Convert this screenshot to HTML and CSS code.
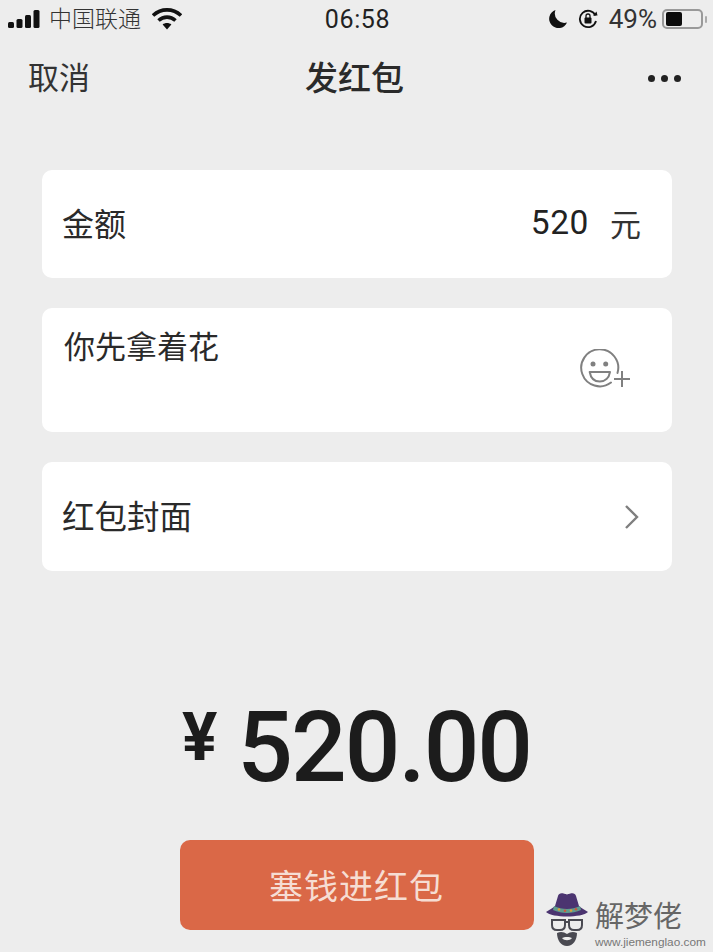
FILE: index.html
```html
<!DOCTYPE html>
<html lang="zh-CN">
<head>
  <meta charset="UTF-8" />
  <meta name="viewport" content="width=device-width, initial-scale=1" />
  <title>发红包</title>
  <link rel="stylesheet" href="styles.css">
</head>
<body>
  <div class="page">
    <!-- Status bar -->
    <div class="status-bar">
      <div class="status-left">
        <svg class="signal" width="34" height="18" viewBox="0 0 34 18">
          <rect x="0" y="12" width="6" height="6" rx="1.5" />
          <rect x="8.5" y="9" width="6" height="9" rx="1.5" />
          <rect x="17" y="5" width="6" height="13" rx="1.5" />
          <rect x="25.5" y="0" width="6" height="18" rx="1.5" />
        </svg>
        <span class="carrier">中国联通</span>
        <svg class="wifi" width="30" height="22" viewBox="0 0 30 22">
          <path d="M1 7.5 C9 0 21 0 29 7.5" />
          <path d="M6.5 12.5 C11.5 8 18.5 8 23.5 12.5" />
          <path d="M15 21.5 L10.6 16.6 C13 14.6 17 14.6 19.4 16.6 Z" class="wifi-dot" />
        </svg>
      </div>
      <div class="status-time">06:58</div>
      <div class="status-right">
        <svg width="20" height="20" viewBox="0 0 20 20">
          <path d="M7.5 1 A9.3 9.3 0 1 0 19 13.5 A9.5 9.5 0 0 1 7.5 1 Z" fill="#111" />
        </svg>
        <svg class="lock" width="20" height="20" viewBox="0 0 20 20">
          <path d="M17.5 6.5 A8.2 8.2 0 1 0 18 12" fill="none" stroke="#111" stroke-width="1.8" />
          <path d="M15 6.5 L19.5 6.5 L18.5 2.5 Z" fill="#111" />
          <rect x="6.5" y="8.5" width="7" height="6" rx="1" fill="#111" />
          <path d="M8 9 V7 A2 2 0 0 1 12 7 V9" fill="none" stroke="#111" stroke-width="1.3" />
        </svg>
        <span class="battery-pct">49%</span>
        <div class="battery">
          <div class="battery-level"></div>
        </div>
        <div class="battery-cap"></div>
      </div>
    </div>

    <!-- Nav -->
    <nav class="navbar">
      <span class="nav-cancel">取消</span>
      <span class="nav-title">发红包</span>
      <div class="nav-more"><i></i><i></i><i></i></div>
    </nav>

    <!-- Form cards -->
    <div class="card card-amount">
      <span class="label">金额</span>
      <div class="amount">
        <span class="amount-num">520</span>
        <span class="amount-unit">元</span>
      </div>
    </div>

    <div class="card card-message">
      <span class="message">你先拿着花</span>
      <svg class="emoji" width="52" height="40" viewBox="0 0 52 40">
        <path d="M32 33.5 A18.5 18.5 0 1 1 38.5 24" fill="none" stroke="#808080" stroke-width="2" stroke-linecap="round" />
        <circle cx="14" cy="15" r="2.5" fill="#808080" />
        <circle cx="26.7" cy="15" r="2.5" fill="#808080" />
        <path d="M10.7 23 H31 C30 29 26 32.5 20.8 32.5 C15.6 32.5 11.7 29 10.7 23 Z" fill="none" stroke="#808080" stroke-width="2" stroke-linejoin="round" />
        <path d="M43 22 V38 M35 30 H51" fill="none" stroke="#808080" stroke-width="2" />
      </svg>
    </div>

    <div class="card card-cover">
      <span class="label label-cover">红包封面</span>
      <svg class="chevron" width="16" height="26" viewBox="0 0 16 26">
        <path d="M2 2 L13 13 L2 24" fill="none" stroke="#7f7f7f" stroke-width="2.4" />
      </svg>
    </div>

    <!-- Total -->
    <div class="total">
      <span class="total-sign">¥</span>
      <span class="total-num">520.00</span>
    </div>

    <div class="submit">塞钱进红包</div>
  </div>

  <!-- Watermark sits on top of the page -->
  <div class="watermark">
    <svg width="42" height="53" viewBox="0 0 42 53">
      <path d="M0 19 C3 17 7 15 9 13 L12 3 C13 -1 17 0 21 1.5 C25 0 29 -1 30 3 L33 13 C35 15 39 17 42 19 C36 25 6 25 0 19 Z" fill="#4b3470" />
      <path d="M8 13 C16 17 26 17 34 13 L35 17 C26 21 16 21 7 17 Z" fill="#5f9c8e" />
      <circle cx="13" cy="16.5" r="1.3" fill="#d8a03c" />
      <circle cx="19" cy="17.8" r="1.3" fill="#c9583f" />
      <circle cx="25" cy="17.6" r="1.3" fill="#d8a03c" />
      <circle cx="30" cy="16.2" r="1.3" fill="#c9583f" />
      <path d="M6 27 H19 V32 C19 35 17 37 14 37 H11 C8 37 6 35 6 32 Z" fill="none" stroke="#4a4a52" stroke-width="2" />
      <path d="M23 27 H36 V32 C36 35 34 37 31 37 H28 C25 37 23 35 23 32 Z" fill="none" stroke="#4a4a52" stroke-width="2" />
      <path d="M19 29 H23" stroke="#4a4a52" stroke-width="2" />
      <path d="M11 40 C15 38 18 39 21 41 C24 39 27 38 31 40 C31 47 27 53 21 53 C15 53 11 47 11 40 Z M16 45 C18 48 24 48 26 45 C24 43.5 18 43.5 16 45 Z" fill="#4a4a52" fill-rule="evenodd" />
    </svg>
    <div class="watermark-text">
      <span class="watermark-name">解梦佬</span>
      <span class="watermark-url">www.jiemenglao.com</span>
    </div>
  </div>
</body>
</html>
```

FILE: styles.css
```css
/* Reset and base styles */
* {
  margin: 0;
  padding: 0;
  box-sizing: border-box;
}

html, body {
  height: 100%;
  font-family: 'Liberation Sans', 'Noto Sans CJK SC', sans-serif;
  background-color: #ededed;
  color: #1c1c1c;
  overflow: hidden;
}

.page {
  display: flex;
  flex-direction: column;
  height: 952px;
}

/* Status bar */
.status-bar {
  display: grid;
  grid-template-columns: 1fr auto 1fr;
  align-items: center;
  height: 32px;
  padding: 0 6px 0 8px;
  color: #222;
}

.status-left {
  display: flex;
  align-items: center;
}

.signal {
  fill: #111;
  margin-right: 7px;
}

.carrier {
  font-size: 23px;
  font-weight: 300;
  color: #333;
  margin-bottom: 4px;
}

.wifi {
  margin-left: 11px;
}

.wifi path {
  fill: none;
  stroke: #111;
  stroke-width: 3.6;
}

.wifi .wifi-dot {
  fill: #111;
  stroke: none;
}

.status-time {
  font-size: 25px;
  letter-spacing: 0.6px;
  font-family: 'Roboto', sans-serif;
}

.status-right {
  display: flex;
  align-items: center;
  justify-content: flex-end;
}

.lock {
  margin-left: 10px;
}

.battery-pct {
  font-size: 26px;
  margin-left: 11px;
  color: #333;
  font-family: 'Roboto', sans-serif;
}

.battery {
  width: 41px;
  height: 20px;
  margin-left: 5px;
  padding: 1px 2px;
  border: 2px solid #999;
  border-radius: 5px;
}

.battery-level {
  width: 16px;
  height: 14px;
  border-radius: 2px;
  background: #0c0c0c;
}

.battery-cap {
  width: 2px;
  height: 7px;
  margin-left: 2px;
  border-radius: 1px;
  background: #aaa;
}

/* Nav */
.navbar {
  display: grid;
  grid-template-columns: 1fr auto 1fr;
  align-items: center;
  height: 92px;
  padding: 0 32px 0 28px;
}

.nav-cancel {
  font-size: 31px;
  color: #333;
  margin-bottom: 5px;
}

.nav-title {
  font-size: 33px;
  font-weight: 500;
  color: #2a2a2a;
  margin-bottom: 5px;
}

.nav-more {
  display: flex;
  justify-content: flex-end;
  gap: 6px;
}

.nav-more i {
  width: 7px;
  height: 7px;
  border-radius: 50%;
  background: #222;
}

/* Cards */
.card {
  display: flex;
  align-items: center;
  justify-content: space-between;
  margin: 0 41px 30px 42px;
  background: #fff;
  border-radius: 10px;
}

.card-amount {
  height: 108px;
  margin-top: 46px;
  padding: 0 31px 0 20px;
}

.label {
  font-size: 32px;
  color: #2a2a2a;
  margin-bottom: 5px;
}

.label-cover {
  font-size: 32.5px;
}

.amount {
  display: flex;
  align-items: center;
  gap: 21px;
  margin-bottom: 4px;
}

.amount-num {
  font-size: 33.5px;
  letter-spacing: 0.6px;
  font-family: 'Roboto', sans-serif;
  color: #222;
}

.amount-unit {
  font-size: 31px;
  color: #333;
}

.card-message {
  height: 124px;
  align-items: flex-start;
  padding: 21px 40px 0 22px;
}

.message {
  font-size: 31px;
  line-height: 38px;
  color: #2a2a2a;
}

.emoji {
  margin-top: 20px;
  margin-right: 1px;
}

.card-cover {
  height: 109px;
  padding: 0 32px 0 20px;
}

.chevron {
  display: block;
}

/* Total */
.total {
  display: flex;
  align-items: center;
  justify-content: center;
  height: 110px;
  margin-top: 96px;
  padding-bottom: 10px;
  color: #1c1c1c;
}

.total-sign {
  font-size: 66px;
  font-weight: 700;
  margin-right: 20px;
  margin-top: -20px;
  font-family: 'Roboto', sans-serif;
}

.total-num {
  font-size: 98px;
  font-weight: 500;
  letter-spacing: -2px;
  font-family: 'Roboto', sans-serif;
}

/* Button */
.submit {
  align-self: center;
  display: flex;
  align-items: center;
  justify-content: center;
  width: 354px;
  height: 90px;
  margin-top: 33px;
  padding-bottom: 2px;
  border-radius: 10px;
  background: #da6847;
  color: #f6ddd3;
  font-size: 34px;
  letter-spacing: 1px;
}

/* Watermark */
.watermark {
  position: absolute;
  left: 546px;
  top: 893px;
  display: flex;
  align-items: flex-start;
  gap: 7px;
}

.watermark-text {
  display: flex;
  flex-direction: column;
  padding-top: 6px;
}

.watermark-name {
  font-size: 29px;
  line-height: 36px;
  color: #666;
}

.watermark-url {
  font-size: 11.8px;
  line-height: 14px;
  color: #777;
}
```
